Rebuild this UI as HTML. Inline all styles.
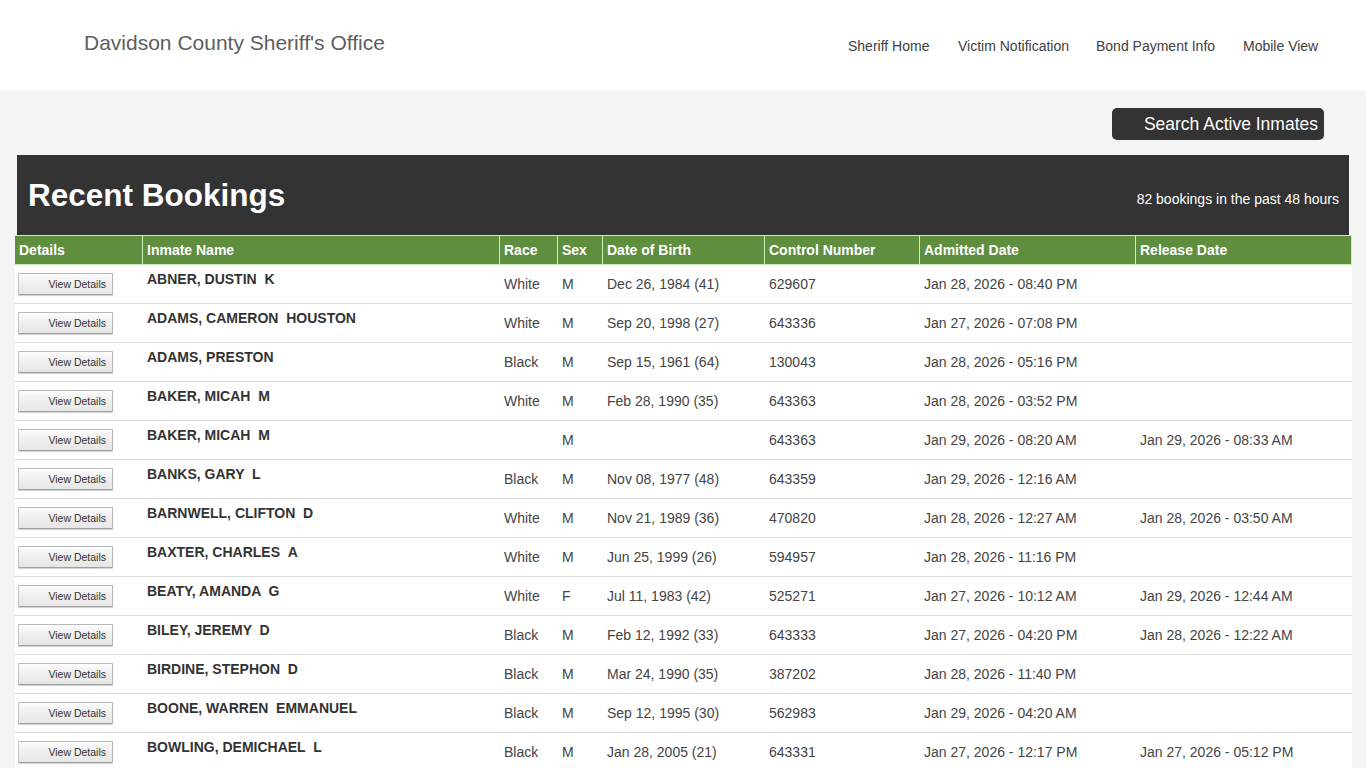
<!DOCTYPE html>
<html><head><meta charset="utf-8">
<style>
html,body{margin:0;padding:0;}
body{width:1366px;height:768px;overflow:hidden;background:#f4f4f4;font-family:"Liberation Sans",sans-serif;position:relative;}
#hdr{position:absolute;left:0;top:0;width:1366px;height:90px;background:#fff;}
#title{position:absolute;left:84px;top:31px;font-size:21px;color:#5e5e5e;white-space:nowrap;line-height:24px;}
.nav{position:absolute;top:38px;font-size:14px;color:#404040;white-space:nowrap;line-height:16px;}
#sbtn{position:absolute;left:1112px;top:108px;width:212px;height:32px;background:#333;border-radius:5px;}
#sbtn span{position:absolute;right:6px;top:6px;font-size:17.5px;color:#fff;line-height:20px;white-space:nowrap;}
#panel{position:absolute;left:17px;top:155px;width:1332px;height:80px;background:#333;}
#panel h1{position:absolute;left:11px;top:22px;margin:0;font-size:31.5px;font-weight:bold;color:#fff;line-height:36px;white-space:nowrap;}
#panel .cnt{position:absolute;right:10px;top:36px;font-size:14px;color:#fff;line-height:16px;white-space:nowrap;}
#tbl{position:absolute;left:15px;top:235px;width:1337px;border-collapse:separate;border-spacing:0;table-layout:fixed;background:#fff;}
#tbl th{background:#5e8e3e;color:#fff;font-size:14px;font-weight:bold;text-align:left;height:30px;padding:0 4px;border-top:1px solid #c8f2b8;border-bottom:1px solid #c8f2b8;border-left:1px solid #c8f2b8;box-sizing:border-box;line-height:16px;}
#tbl th:first-child{border-left:0;}
#tbl th:last-child{border-right:1px solid #c8f2b8;}
#tbl td{height:39px;padding:0 4px 0 5px;font-size:14px;color:#444;border-bottom:1px solid #ddd;box-sizing:border-box;vertical-align:middle;line-height:16px;white-space:nowrap;}
#tbl td.nm{vertical-align:top;padding-top:6px;font-weight:bold;color:#333;}
#tbl td.bt{padding:0 0 0 3px;}
.vd{display:block;width:95px;height:22px;box-sizing:border-box;border:1px solid #b8b8b8;border-left-color:#c4c4c4;border-bottom-color:#a0a0a0;border-radius:1px;background:linear-gradient(#fefefe 0%,#f4f4f4 25%,#e6e6e6 100%);font-size:10.5px;color:#333;text-align:right;padding-right:6px;line-height:20px;box-shadow:0 1px 1px #d0d0d0;}
</style></head><body>
<div id="hdr">
<div id="title">Davidson County Sheriff's Office</div>
<div class="nav" style="left:848px">Sheriff Home</div>
<div class="nav" style="left:958px">Victim Notification</div>
<div class="nav" style="left:1096px">Bond Payment Info</div>
<div class="nav" style="left:1243px">Mobile View</div>
</div>
<div id="sbtn"><span>Search Active Inmates</span></div>
<div id="panel"><h1>Recent Bookings</h1><div class="cnt">82 bookings in the past 48 hours</div></div>
<table id="tbl">
<colgroup><col style="width:127px"><col style="width:357px"><col style="width:58px"><col style="width:45px"><col style="width:162px"><col style="width:155px"><col style="width:216px"><col style="width:217px"></colgroup>
<tr><th>Details</th><th>Inmate Name</th><th>Race</th><th>Sex</th><th>Date of Birth</th><th>Control Number</th><th>Admitted Date</th><th>Release Date</th></tr>
<tr><td class="bt"><span class="vd">View Details</span></td><td class="nm">ABNER, DUSTIN &nbsp;K</td><td>White</td><td>M</td><td>Dec 26, 1984 (41)</td><td>629607</td><td>Jan 28, 2026 - 08:40 PM</td><td></td></tr>
<tr><td class="bt"><span class="vd">View Details</span></td><td class="nm">ADAMS, CAMERON &nbsp;HOUSTON</td><td>White</td><td>M</td><td>Sep 20, 1998 (27)</td><td>643336</td><td>Jan 27, 2026 - 07:08 PM</td><td></td></tr>
<tr><td class="bt"><span class="vd">View Details</span></td><td class="nm">ADAMS, PRESTON</td><td>Black</td><td>M</td><td>Sep 15, 1961 (64)</td><td>130043</td><td>Jan 28, 2026 - 05:16 PM</td><td></td></tr>
<tr><td class="bt"><span class="vd">View Details</span></td><td class="nm">BAKER, MICAH &nbsp;M</td><td>White</td><td>M</td><td>Feb 28, 1990 (35)</td><td>643363</td><td>Jan 28, 2026 - 03:52 PM</td><td></td></tr>
<tr><td class="bt"><span class="vd">View Details</span></td><td class="nm">BAKER, MICAH &nbsp;M</td><td></td><td>M</td><td></td><td>643363</td><td>Jan 29, 2026 - 08:20 AM</td><td>Jan 29, 2026 - 08:33 AM</td></tr>
<tr><td class="bt"><span class="vd">View Details</span></td><td class="nm">BANKS, GARY &nbsp;L</td><td>Black</td><td>M</td><td>Nov 08, 1977 (48)</td><td>643359</td><td>Jan 29, 2026 - 12:16 AM</td><td></td></tr>
<tr><td class="bt"><span class="vd">View Details</span></td><td class="nm">BARNWELL, CLIFTON &nbsp;D</td><td>White</td><td>M</td><td>Nov 21, 1989 (36)</td><td>470820</td><td>Jan 28, 2026 - 12:27 AM</td><td>Jan 28, 2026 - 03:50 AM</td></tr>
<tr><td class="bt"><span class="vd">View Details</span></td><td class="nm">BAXTER, CHARLES &nbsp;A</td><td>White</td><td>M</td><td>Jun 25, 1999 (26)</td><td>594957</td><td>Jan 28, 2026 - 11:16 PM</td><td></td></tr>
<tr><td class="bt"><span class="vd">View Details</span></td><td class="nm">BEATY, AMANDA &nbsp;G</td><td>White</td><td>F</td><td>Jul 11, 1983 (42)</td><td>525271</td><td>Jan 27, 2026 - 10:12 AM</td><td>Jan 29, 2026 - 12:44 AM</td></tr>
<tr><td class="bt"><span class="vd">View Details</span></td><td class="nm">BILEY, JEREMY &nbsp;D</td><td>Black</td><td>M</td><td>Feb 12, 1992 (33)</td><td>643333</td><td>Jan 27, 2026 - 04:20 PM</td><td>Jan 28, 2026 - 12:22 AM</td></tr>
<tr><td class="bt"><span class="vd">View Details</span></td><td class="nm">BIRDINE, STEPHON &nbsp;D</td><td>Black</td><td>M</td><td>Mar 24, 1990 (35)</td><td>387202</td><td>Jan 28, 2026 - 11:40 PM</td><td></td></tr>
<tr><td class="bt"><span class="vd">View Details</span></td><td class="nm">BOONE, WARREN &nbsp;EMMANUEL</td><td>Black</td><td>M</td><td>Sep 12, 1995 (30)</td><td>562983</td><td>Jan 29, 2026 - 04:20 AM</td><td></td></tr>
<tr><td class="bt"><span class="vd">View Details</span></td><td class="nm">BOWLING, DEMICHAEL &nbsp;L</td><td>Black</td><td>M</td><td>Jan 28, 2005 (21)</td><td>643331</td><td>Jan 27, 2026 - 12:17 PM</td><td>Jan 27, 2026 - 05:12 PM</td></tr>
</table>
</body></html>
